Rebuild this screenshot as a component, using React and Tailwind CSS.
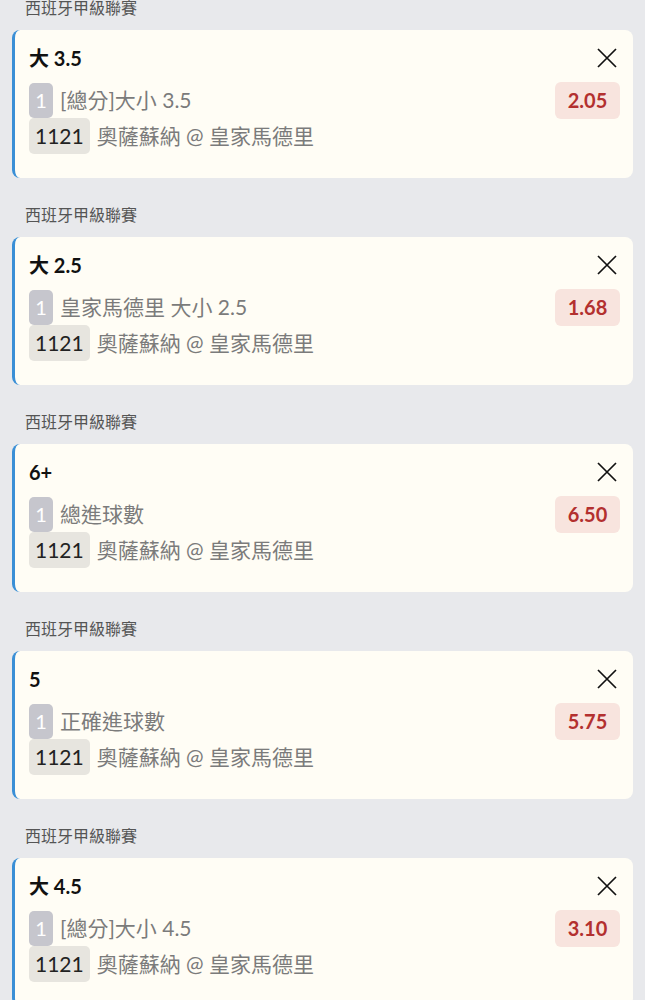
import React from "react";

const items = [
  { title: "大 3.5", desc: "[總分]大小 3.5", odds: "2.05" },
  { title: "大 2.5", desc: "皇家馬德里 大小 2.5", odds: "1.68" },
  { title: "6+", desc: "總進球數", odds: "6.50" },
  { title: "5", desc: "正確進球數", odds: "5.75" },
  { title: "大 4.5", desc: "[總分]大小 4.5", odds: "3.10" },
];

function CloseIcon() {
  return (
    <svg width="22" height="22" viewBox="0 0 22 22" className="mr-[2px]">
      <path d="M2 2 L20 20 M20 2 L2 20" stroke="#111" strokeWidth="1.7" fill="none" />
    </svg>
  );
}

function Block({ item }) {
  return (
    <div>
      <div className="pt-[27px] pb-[12px] pl-[25px] h-[59px] text-[16px] leading-[20px] text-[#555]">
        西班牙甲級聯賽
      </div>
      <div className="mx-[12px] h-[148px] rounded-[8px] border-l-[3px] border-[#3a8fd6] bg-[#fffdf5] pl-[14px] pr-[13px] pt-[16px] pb-[24px]">
        <div className="flex h-[24px] items-center justify-between">
          <span className="text-[20px] font-bold leading-[24px] text-[#111]">{item.title}</span>
          <CloseIcon />
        </div>
        <div className="mt-[12px] flex h-[36px] items-center justify-between">
          <div className="flex items-center">
            <span className="flex h-[35px] w-[24px] items-center justify-center rounded-[5px] bg-[#c6c6cd] text-[20px] text-white">
              1
            </span>
            <span className="ml-[7px] text-[21px] text-[#7b7b7b]">{item.desc}</span>
          </div>
          <span className="flex h-[37px] w-[65px] items-center justify-center rounded-[6px] bg-[#f8e4de] text-[20px] font-bold text-[#b3302f]">
            {item.odds}
          </span>
        </div>
        <div className="flex h-[36px] items-center">
          <span className="flex h-[36px] items-center rounded-[5px] bg-[#e7e5df] px-[6px] text-[21px] text-[#222]">
            1121
          </span>
          <span className="ml-[7px] text-[21px] text-[#7b7b7b]">奧薩蘇納 @ 皇家馬德里</span>
        </div>
      </div>
    </div>
  );
}

export default function App() {
  return (
    <div
      className="h-[1000px] overflow-hidden bg-[#e8e9ec]"
      style={{ fontFamily: "Lato, 'Noto Sans CJK TC', sans-serif" }}
    >
      <div className="-mt-[29px]">
        {items.map((it, i) => (
          <Block key={i} item={it} />
        ))}
      </div>
    </div>
  );
}
